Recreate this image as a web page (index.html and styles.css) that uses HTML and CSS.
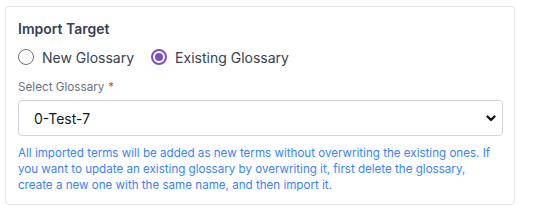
FILE: index.html
```html
<!DOCTYPE html>
<html>
<head>
<meta charset="utf-8">
<link rel="stylesheet" href="styles.css">
</head>
<body>
<div class="card">
  <div class="title">Import Target</div>
  <div class="radios">
    <label class="radio"><span class="dot"></span>New Glossary</label>
    <label class="radio"><span class="dot checked"></span>Existing Glossary</label>
  </div>
  <div class="label">Select Glossary<span class="req">*</span></div>
  <div class="select-wrap">
    <div class="select">0-Test-7</div>
    <svg class="chev" width="10" height="7" viewBox="0 0 10 7"><path d="M1.5 1.5l3.5 3.5 3.5-3.5" fill="none" stroke="#111" stroke-width="2.3" stroke-linecap="round" stroke-linejoin="round"/></svg>
  </div>
  <p class="help">All imported terms will be added as new terms without overwriting the existing ones. If you want to update an existing glossary by overwriting it, first delete the glossary, create a new one with the same name, and then import it.</p>
</div>
</body>
</html>
```
FILE: styles.css
```css
body { margin: 0; font-family: Inter, "Noto Sans", sans-serif; background: #fff; }
.card {
  margin: 6px 0 0 5px;
  border: 1px solid #e5e7eb;
  border-radius: 4px;
  padding: 12px 11px 11px 12px;
  box-sizing: border-box;
  width: 510px;
}
.title { font-size: 14px; line-height: 20px; font-weight: 600; color: #374151; }
.radios { display: flex; gap: 17px; margin-top: 6px; height: 24px; align-items: center; }
.radio { display: flex; align-items: center; gap: 8px; font-size: 14px; color: #374151; }
.dot {
  width: 16px; height: 16px; border-radius: 50%;
  border: 1px solid #6b7280; box-sizing: border-box; position: relative;
}
.dot.checked { border: 2px solid #7a4fc4; }
.dot.checked::after {
  content: ""; position: absolute; left: 2px; top: 2px; width: 8px; height: 8px;
  border-radius: 50%; background: #7a4fc4;
}
.label { margin-top: 10px; font-size: 11.7px; line-height: 16px; color: #6b7280; }
.req { color: #ef4444; margin-left: 4px; }
.select-wrap { position: relative; margin-top: 5px; }
.select {
  height: 36px; box-sizing: border-box; border: 1px solid #d1d5db; border-radius: 4px;
  padding: 0 15px; display: flex; align-items: center; font-size: 14px; color: #111827;
}
.chev { position: absolute; right: 7px; top: 15px; }
.help { margin: 9px 0 0; font-size: 11.6px; line-height: 16px; color: #3b82f6; }
```
